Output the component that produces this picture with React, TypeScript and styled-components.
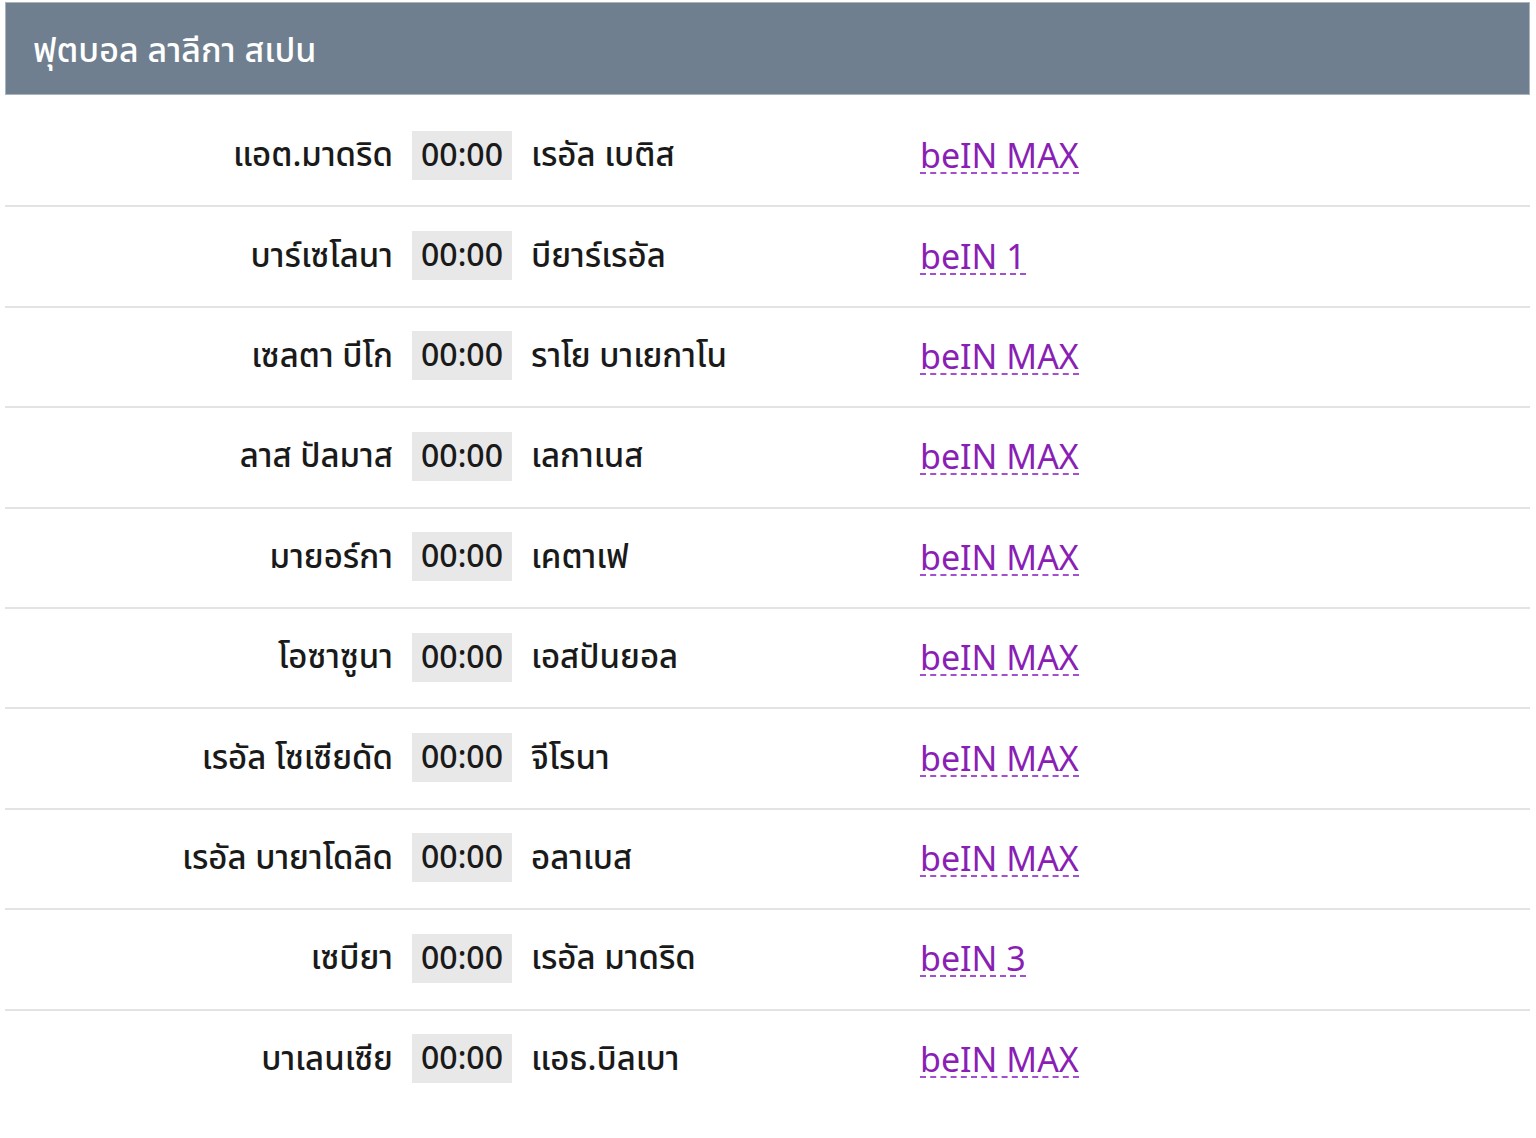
import styled, { createGlobalStyle } from "styled-components";

const GlobalStyle = createGlobalStyle`
  body {
    margin: 0;
    background: #ffffff;
    font-family: "Noto Sans", "Noto Sans Thai", "DejaVu Sans", sans-serif;
  }
`;

const Page = styled.div`
  padding: 2px 6px 0 5px;
`;

const Header = styled.div`
  height: 93px;
  box-sizing: border-box;
  background-color: #6f7f8f;
  border: 1px solid #aab4be;
  color: #ffffff;
  font-size: 34px;
  font-weight: 500;
  padding: 5px 0 0 27px;
  display: flex;
  align-items: center;
`;

const Fixtures = styled.div`
  margin-top: 12px;
  display: flex;
  flex-direction: column;
`;

const Row = styled.div<{ last?: boolean }>`
  display: grid;
  grid-template-columns: 388px 100px 370px 1fr;
  column-gap: 19px;
  align-items: center;
  height: 100.4px;
  box-sizing: border-box;
  border-bottom: 2px solid ${(p) => (p.last ? "transparent" : "#e3e3e3")};
  font-size: 33px;
  font-weight: 500;
  color: #1a1a1a;
`;

const Home = styled.div`
  text-align: right;
  white-space: nowrap;
`;

const Away = styled.div`
  white-space: nowrap;
`;

const Time = styled.div`
  background-color: #e8e8e8;
  height: 49px;
  box-sizing: border-box;
  padding-bottom: 4px;
  margin-top: -2px;
  display: flex;
  align-items: center;
  justify-content: center;
  font-size: 32px;
`;

const Channel = styled.a`
  justify-self: start;
  color: #8a1fb5;
  text-decoration: none;
  border-bottom: 2px dashed #a44fd0;
  line-height: 1;
  font-size: 34px;
  font-weight: 400;
`;

const matches = [
  { home: "แอต.มาดริด", away: "เรอัล เบติส", channel: "beIN MAX" },
  { home: "บาร์เซโลนา", away: "บียาร์เรอัล", channel: "beIN 1" },
  { home: "เซลตา บีโก", away: "ราโย บาเยกาโน", channel: "beIN MAX" },
  { home: "ลาส ปัลมาส", away: "เลกาเนส", channel: "beIN MAX" },
  { home: "มายอร์กา", away: "เคตาเฟ", channel: "beIN MAX" },
  { home: "โอซาซูนา", away: "เอสปันยอล", channel: "beIN MAX" },
  { home: "เรอัล โซเซียดัด", away: "จีโรนา", channel: "beIN MAX" },
  { home: "เรอัล บายาโดลิด", away: "อลาเบส", channel: "beIN MAX" },
  { home: "เซบียา", away: "เรอัล มาดริด", channel: "beIN 3" },
  { home: "บาเลนเซีย", away: "แอธ.บิลเบา", channel: "beIN MAX" },
];

function App() {
  return (
    <>
      <GlobalStyle />
      <Page>
        <Header>ฟุตบอล ลาลีกา สเปน</Header>
        <Fixtures>
          {matches.map((m, i) => (
            <Row key={i} last={i === matches.length - 1}>
              <Home>{m.home}</Home>
              <Time>00:00</Time>
              <Away>{m.away}</Away>
              <Channel href="#">{m.channel}</Channel>
            </Row>
          ))}
        </Fixtures>
      </Page>
    </>
  );
}

export default App;
